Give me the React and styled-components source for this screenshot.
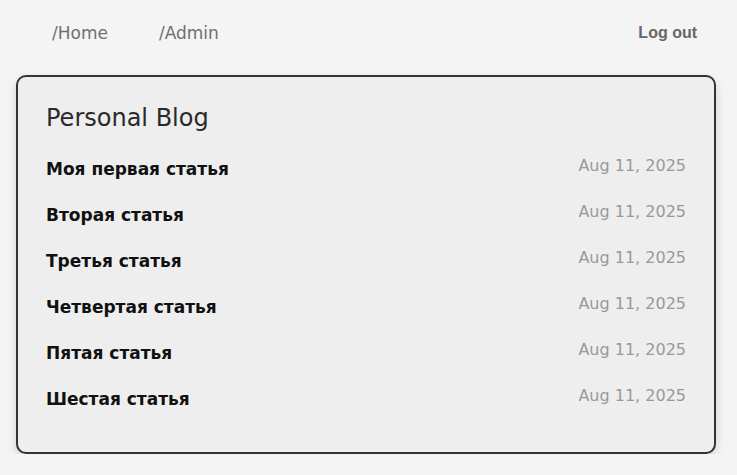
import React from 'react';
import styled, { createGlobalStyle } from 'styled-components';

const GlobalStyle = createGlobalStyle`
  body {
    margin: 0;
    background: #f4f4f4;
    font-family: "DejaVu Sans", "Liberation Sans", sans-serif;
  }
`;

const Page = styled.div`
  padding: 0 21px 0 16px;
`;

const Nav = styled.nav`
  display: flex;
  align-items: center;
  justify-content: space-between;
  height: 66px;
  padding: 0 19px 0 36px;
  margin-bottom: 9px;
`;

const NavLinks = styled.div`
  display: flex;
  gap: 51px;
`;

const NavLink = styled.a`
  font-size: 17px;
  color: #6f6f6f;
  text-decoration: none;
`;

const LogoutButton = styled.button`
  background: none;
  border: none;
  padding: 0;
  font-family: "Liberation Sans", Arial, sans-serif;
  font-weight: bold;
  font-size: 16px;
  color: #666;
  cursor: pointer;
`;

const Card = styled.section`
  background: #eee;
  border: 2px solid #333;
  border-radius: 10px;
  box-shadow: 0 4px 10px rgba(0, 0, 0, 0.15);
  padding: 27px 28px 36px 28px;
  height: 379px;
  box-sizing: border-box;
`;

const Title = styled.h1`
  margin: 0 0 25px;
  font-size: 24px;
  font-weight: normal;
  color: #2a2a2a;
`;

const List = styled.ul`
  list-style: none;
  margin: 0;
  padding: 0;
  display: flex;
  flex-direction: column;
  gap: 24px;
`;

const Post = styled.li`
  display: flex;
  justify-content: space-between;
  align-items: flex-start;
  height: 22px;
`;

const PostTitle = styled.a`
  font-size: 17px;
  font-weight: bold;
  color: #111;
  text-decoration: none;
  padding-top: 2px;
`;

const PostDate = styled.span`
  font-size: 16px;
  color: #999;
  margin-top: -1px;
`;

const posts = [
  'Моя первая статья',
  'Вторая статья',
  'Третья статья',
  'Четвертая статья',
  'Пятая статья',
  'Шестая статья',
];

export default function App() {
  return (
    <>
      <GlobalStyle />
      <Page>
        <Nav>
          <NavLinks>
            <NavLink href="#">/Home</NavLink>
            <NavLink href="#">/Admin</NavLink>
          </NavLinks>
          <LogoutButton>Log out</LogoutButton>
        </Nav>
        <Card>
          <Title>Personal Blog</Title>
          <List>
            {posts.map((p) => (
              <Post key={p}>
                <PostTitle href="#">{p}</PostTitle>
                <PostDate>Aug 11, 2025</PostDate>
              </Post>
            ))}
          </List>
        </Card>
      </Page>
    </>
  );
}
